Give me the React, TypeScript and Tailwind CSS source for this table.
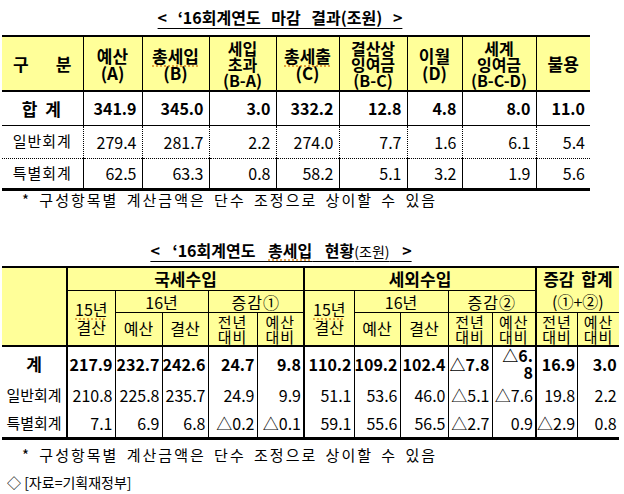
const Y = "bg-[#ffff99]";

const t1Total = ["341.9", "345.0", "3.0", "332.2", "12.8", "4.8", "8.0", "11.0"];
const t1Rows = [
  { label: "일반회계", h: "h-[33px]", values: ["279.4", "281.7", "2.2", "274.0", "7.7", "1.6", "6.1", "5.4"], line: "border-b border-dotted" },
  { label: "특별회계", h: "h-[31px]", values: ["62.5", "63.3", "0.8", "58.2", "5.1", "3.2", "1.9", "5.6"], line: "border-b-[3px]" },
];

const t2Rows = [
  {
    label: "계",
    bold: true,
    h: "h-[36px]",
    values: ["217.9", "232.7", "242.6", "24.7", "9.8", "110.2", "109.2", "102.4", "△7.8", "△6.|8", "16.9", "3.0"],
  },
  {
    label: "일반회계",
    bold: false,
    h: "h-[28px]",
    values: ["210.8", "225.8", "235.7", "24.9", "9.9", "51.1", "53.6", "46.0", "△5.1", "△7.6", "19.8", "2.2"],
  },
  {
    label: "특별회계",
    bold: false,
    h: "h-[29px]",
    values: ["7.1", "6.9", "6.8", "△0.2", "△0.1", "59.1", "55.6", "56.5", "△2.7", "0.9", "△2.9", "0.8"],
  },
];

// column borders of the second table: thick after the label, before 세외수입 and before 증감 합계
const t2Left = (i: number) => (i === 0 || i === 5 || i === 10 ? "border-l-2" : "border-l");

const Spell = ({ children }: { children: React.ReactNode }) => (
  <span className="underline decoration-dotted decoration-[#e0902a] underline-offset-[3px]">{children}</span>
);

const App = () => {
  return (
    <div className="w-[624px] h-[494px] overflow-hidden bg-white text-black font-['Noto_Sans_CJK_KR',sans-serif]">
      {/* first table */}
      <div className="w-[560px] pt-[7px] mb-[8px] text-center text-[16px] leading-[20px] font-bold [word-spacing:7px]">
        <span className="underline underline-offset-[4px]">&lt; ‘16회계연도 마감 결과(조원) &gt;</span>
      </div>

      <table className="ml-[2px] table-fixed border-collapse border-black">
        <colgroup>
          <col className="w-[81px]" />
          <col className="w-[59px]" />
          <col className="w-[67px]" />
          <col className="w-[67px]" />
          <col className="w-[63px]" />
          <col className="w-[68px]" />
          <col className="w-[55px]" />
          <col className="w-[74px]" />
          <col className="w-[54px]" />
        </colgroup>
        <tbody>
          <tr className="h-[55px] text-[17px] font-bold leading-[17px] text-center">
            <td className={`${Y} border-t-2 border-b-2 border-black`}>
              <div className="flex justify-between px-[11px]">
                <span>구</span>
                <span>분</span>
              </div>
            </td>
            <td className={`${Y} border-t-2 border-b-2 border-l border-black`}>
              예산
              <br />
              (A)
            </td>
            <td className={`${Y} border-t-2 border-b-2 border-l border-black`}>
              <Spell>총세입</Spell>
              <br />
              (B)
            </td>
            <td className={`${Y} border-t-2 border-b-2 border-l border-black text-[16px] leading-[16px]`}>
              세입
              <br />
              초과
              <br />
              (B-A)
            </td>
            <td className={`${Y} border-t-2 border-b-2 border-l border-black`}>
              <Spell>총세출</Spell>
              <br />
              (C)
            </td>
            <td className={`${Y} border-t-2 border-b-2 border-l border-black text-[16px] leading-[16px]`}>
              결산상
              <br />
              잉여금
              <br />
              (B-C)
            </td>
            <td className={`${Y} border-t-2 border-b-2 border-l border-black`}>
              이월
              <br />
              (D)
            </td>
            <td className={`${Y} border-t-2 border-b-2 border-l border-black text-[16px] leading-[16px]`}>
              세계
              <br />
              잉여금
              <br />
              (B-C-D)
            </td>
            <td className={`${Y} border-t-2 border-b-2 border-l border-black`}>불용</td>
          </tr>

          <tr className="h-[34px] font-bold">
            <td className="border-b border-black text-center text-[17px] tracking-[2px]">합 계</td>
            {t1Total.map((v, i) => (
              <td key={i} className="border-b border-l border-black pr-[5px] text-right text-[16px]">
                {v}
              </td>
            ))}
          </tr>

          {t1Rows.map((row) => (
            <tr key={row.label} className={`${row.h} text-[16px]`}>
              <td className={`${row.line} border-black text-center text-[15px] tracking-[1px]`}>{row.label}</td>
              {row.values.map((v, i) => (
                <td key={i} className={`${row.line} border-l border-black pr-[5px] text-right`}>
                  {v}
                </td>
              ))}
            </tr>
          ))}
        </tbody>
      </table>

      <div className="pl-[22px] text-[15px] leading-[18px] tracking-[2px] [word-spacing:3px]">
        * 구성항목별 계산금액은 단수 조정으로 상이할 수 있음
      </div>

      {/* second table */}
      <div className="w-[562px] mt-[31px] mb-[5px] text-center text-[16px] leading-[20px] font-bold [word-spacing:9px]">
        <span className="underline underline-offset-[4px]">
          &lt; ‘16회계연도 <Spell>총세입</Spell> 현황<span className="text-[14px] font-normal">(조원)</span> &gt;
        </span>
      </div>

      <table className="ml-[2px] table-fixed border-collapse border-black">
        <colgroup>
          <col className="w-[65px]" />
          <col className="w-[48px]" />
          <col className="w-[47px]" />
          <col className="w-[46px]" />
          <col className="w-[49px]" />
          <col className="w-[47px]" />
          <col className="w-[50px]" />
          <col className="w-[46px]" />
          <col className="w-[48px]" />
          <col className="w-[44px]" />
          <col className="w-[44px]" />
          <col className="w-[41px]" />
          <col className="w-[41px]" />
        </colgroup>
        <tbody className="text-center">
          <tr className="h-[24px] text-[17px] font-bold leading-[20px]">
            <td rowSpan={3} className={`${Y} border-t-2 border-b-2 border-black`} />
            <td colSpan={5} className={`${Y} border-t-2 border-b border-l-2 border-black`}>
              국세수입
            </td>
            <td colSpan={5} className={`${Y} border-t-2 border-b border-l-2 border-black`}>
              세외수입
            </td>
            <td colSpan={2} className={`${Y} border-t-2 border-l-2 border-black [word-spacing:3px]`}>
              증감 합계
            </td>
          </tr>
          <tr className="h-[22px] text-[16px] leading-[18px]">
            <td rowSpan={2} className={`${Y} border-b-2 border-l-2 border-black`}>
              <Spell>15년</Spell>
              <br />
              결산
            </td>
            <td colSpan={2} className={`${Y} border-b border-l border-black`}>
              16년
            </td>
            <td colSpan={2} className={`${Y} border-b border-l border-black tracking-[1px]`}>
              증감①
            </td>
            <td rowSpan={2} className={`${Y} border-b-2 border-l-2 border-black`}>
              <Spell>15년</Spell>
              <br />
              결산
            </td>
            <td colSpan={2} className={`${Y} border-b border-l border-black`}>
              16년
            </td>
            <td colSpan={2} className={`${Y} border-b border-l border-black tracking-[1px]`}>
              증감②
            </td>
            <td colSpan={2} className={`${Y} border-b border-l-2 border-black`}>
              (①+②)
            </td>
          </tr>
          <tr className="h-[33px] text-[16px] leading-[15px]">
            {[
              ["예산"],
              ["결산"],
              ["전년", "대비"],
              ["예산", "대비"],
              ["예산"],
              ["결산"],
              ["전년", "대비"],
              ["예산", "대비"],
              ["전년", "대비"],
              ["예산", "대비"],
            ].map((lines, i) => (
              <td
                key={i}
                className={`${Y} border-b-2 ${i === 8 ? "border-l-2" : "border-l"} border-black ${
                  lines.length > 1 ? "text-[15px] tracking-[1px]" : ""
                }`}
              >
                {lines.map((l, j) => (
                  <div key={j}>{l}</div>
                ))}
              </td>
            ))}
          </tr>

          {t2Rows.map((row, r) => (
            <tr key={row.label} className={`${row.h} text-[16px] ${row.bold ? "font-bold" : ""}`}>
              <td
                className={`border-black ${r === 2 ? "border-b-[3px]" : ""} ${
                  row.bold ? "text-[17px]" : "text-[15px]"
                }`}
              >
                {row.label}
              </td>
              {row.values.map((v, i) => (
                <td
                  key={i}
                  className={`${t2Left(i)} border-black ${
                    r === 2 ? "border-b-[3px]" : ""
                  } pr-[2px] text-right whitespace-nowrap leading-[17px]`}
                >
                  {v.split("|").map((p, j) => (
                    <div key={j}>{p}</div>
                  ))}
                </td>
              ))}
            </tr>
          ))}
        </tbody>
      </table>

      <div className="mt-[6px] pl-[22px] text-[15px] leading-[18px] tracking-[2px] [word-spacing:3px]">
        * 구성항목별 계산금액은 단수 조정으로 상이할 수 있음
      </div>
      <div className="mt-[9px] pl-[7px] text-[14px] leading-[18px]">◇ [자료=기획재정부]</div>
    </div>
  );
};

export default App;
